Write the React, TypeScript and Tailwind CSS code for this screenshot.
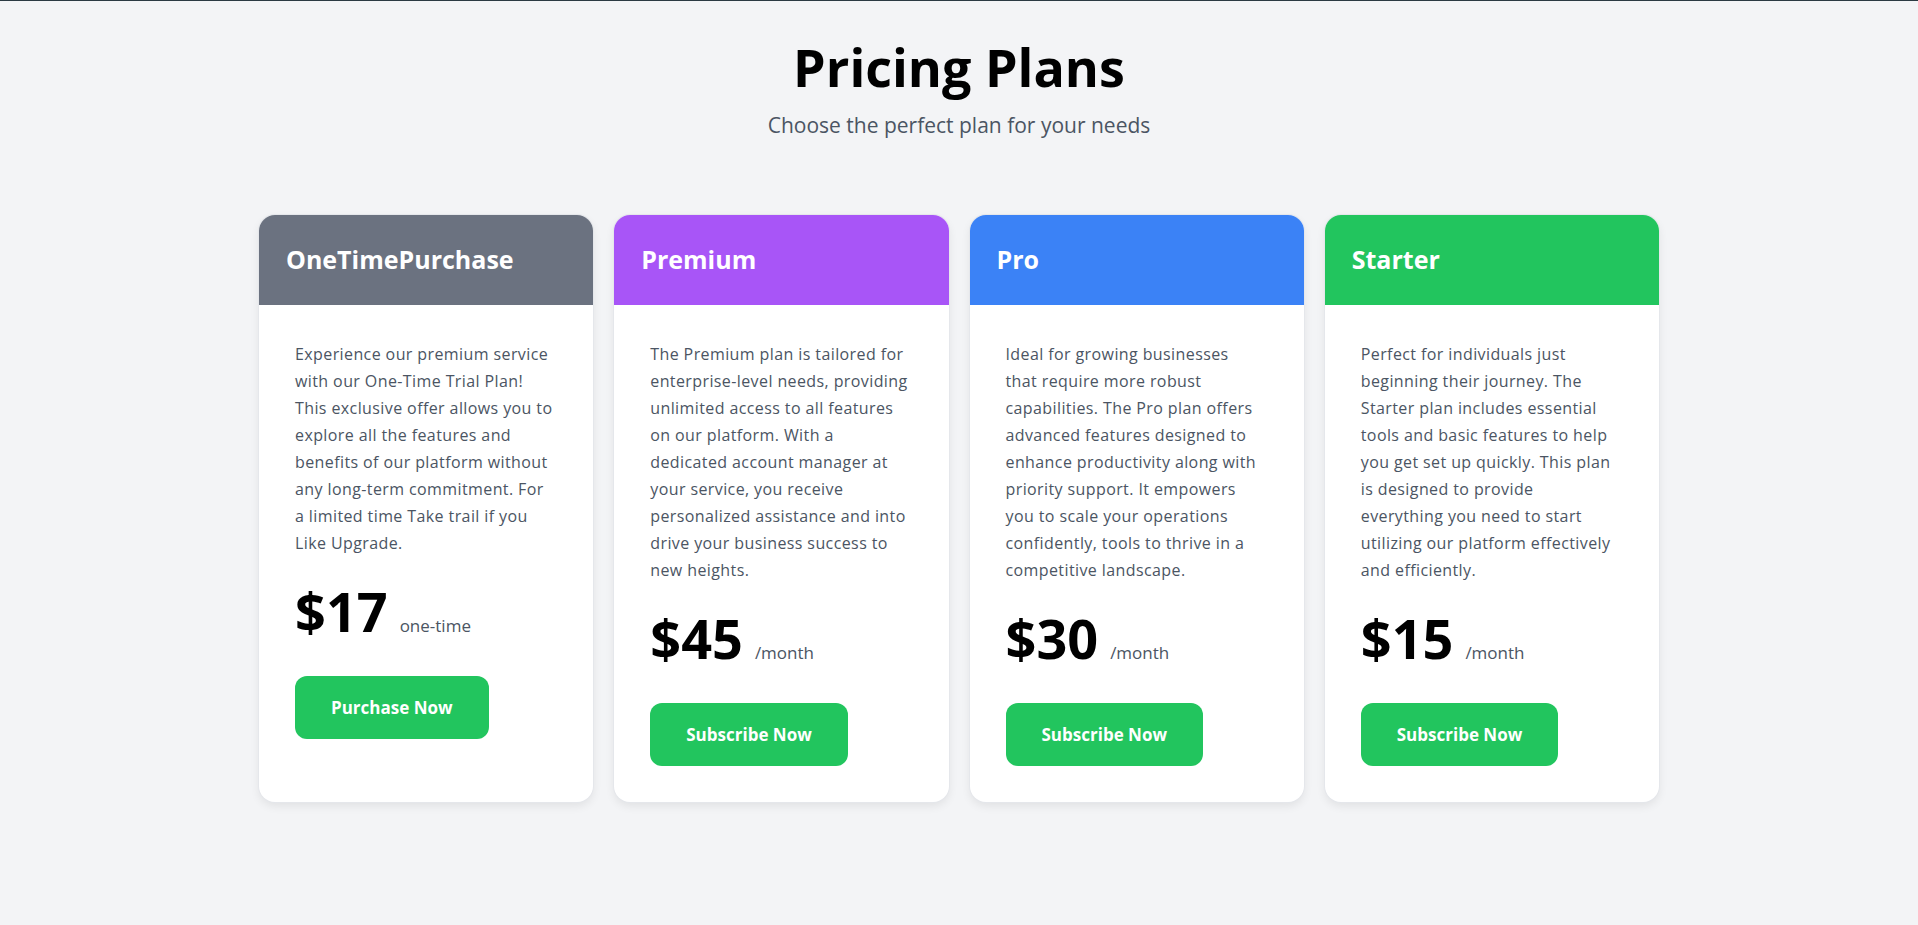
const plans = [
  {
    name: "OneTimePurchase",
    header: "bg-[#6b7280]",
    lines: [
      "Experience our premium service",
      "with our One-Time Trial Plan!",
      "This exclusive offer allows you to",
      "explore all the features and",
      "benefits of our platform without",
      "any long-term commitment. For",
      "a limited time Take trail if you",
      "Like Upgrade.",
    ],
    price: "$17",
    period: "one-time",
    cta: "Purchase Now",
  },
  {
    name: "Premium",
    header: "bg-[#a855f7]",
    lines: [
      "The Premium plan is tailored for",
      "enterprise-level needs, providing",
      "unlimited access to all features",
      "on our platform. With a",
      "dedicated account manager at",
      "your service, you receive",
      "personalized assistance and into",
      "drive your business success to",
      "new heights.",
    ],
    price: "$45",
    period: "/month",
    cta: "Subscribe Now",
  },
  {
    name: "Pro",
    header: "bg-[#3b82f6]",
    lines: [
      "Ideal for growing businesses",
      "that require more robust",
      "capabilities. The Pro plan offers",
      "advanced features designed to",
      "enhance productivity along with",
      "priority support. It empowers",
      "you to scale your operations",
      "confidently, tools to thrive in a",
      "competitive landscape.",
    ],
    price: "$30",
    period: "/month",
    cta: "Subscribe Now",
  },
  {
    name: "Starter",
    header: "bg-[#22c55e]",
    lines: [
      "Perfect for individuals just",
      "beginning their journey. The",
      "Starter plan includes essential",
      "tools and basic features to help",
      "you get set up quickly. This plan",
      "is designed to provide",
      "everything you need to start",
      "utilizing our platform effectively",
      "and efficiently.",
    ],
    price: "$15",
    period: "/month",
    cta: "Subscribe Now",
  },
]

export default function App() {
  return (
    <section className="min-h-screen w-full border-t border-[#2b3a42] bg-[#f3f4f6] font-['Open_Sans',sans-serif]">
      <div className="flex flex-col items-center pt-[34px]">
        <h1 className="text-[52px] font-bold leading-[64px] text-black">Pricing Plans</h1>
        <p className="mt-3 text-[21px] leading-7 text-[#4b5563]">Choose the perfect plan for your needs</p>
      </div>

      <div className="mx-auto mt-[76px] grid w-[1400px] grid-cols-4 gap-[21px]">
        {plans.map((plan) => (
          <div
            key={plan.name}
            className="flex flex-col overflow-hidden rounded-2xl bg-white shadow-[0_4px_10px_rgba(0,0,0,0.08)] ring-1 ring-[#e5e7eb]"
          >
            <div className={`flex h-[90px] items-center px-[27px] ${plan.header}`}>
              <h2 className="text-[25px] font-bold text-white">{plan.name}</h2>
            </div>
            <div className="flex flex-1 flex-col items-start p-9">
              <p className="whitespace-nowrap text-base leading-[27px] tracking-[0.4px] text-[#4b5563]">
                {plan.lines.map((line, i) => (
                  <span key={i}>
                    {line}
                    {i < plan.lines.length - 1 && <br />}
                  </span>
                ))}
              </p>
              <div className="mt-6 flex items-baseline">
                <span className="text-[54px] font-bold leading-[60px] text-black">{plan.price}</span>
                <span className="ml-3 text-[17px] text-[#4b5563]">{plan.period}</span>
              </div>
              <button className="mt-[35px] h-[63px] rounded-xl bg-[#22c55e] px-9 text-[17px] font-bold text-white">
                {plan.cta}
              </button>
            </div>
          </div>
        ))}
      </div>
    </section>
  )
}
